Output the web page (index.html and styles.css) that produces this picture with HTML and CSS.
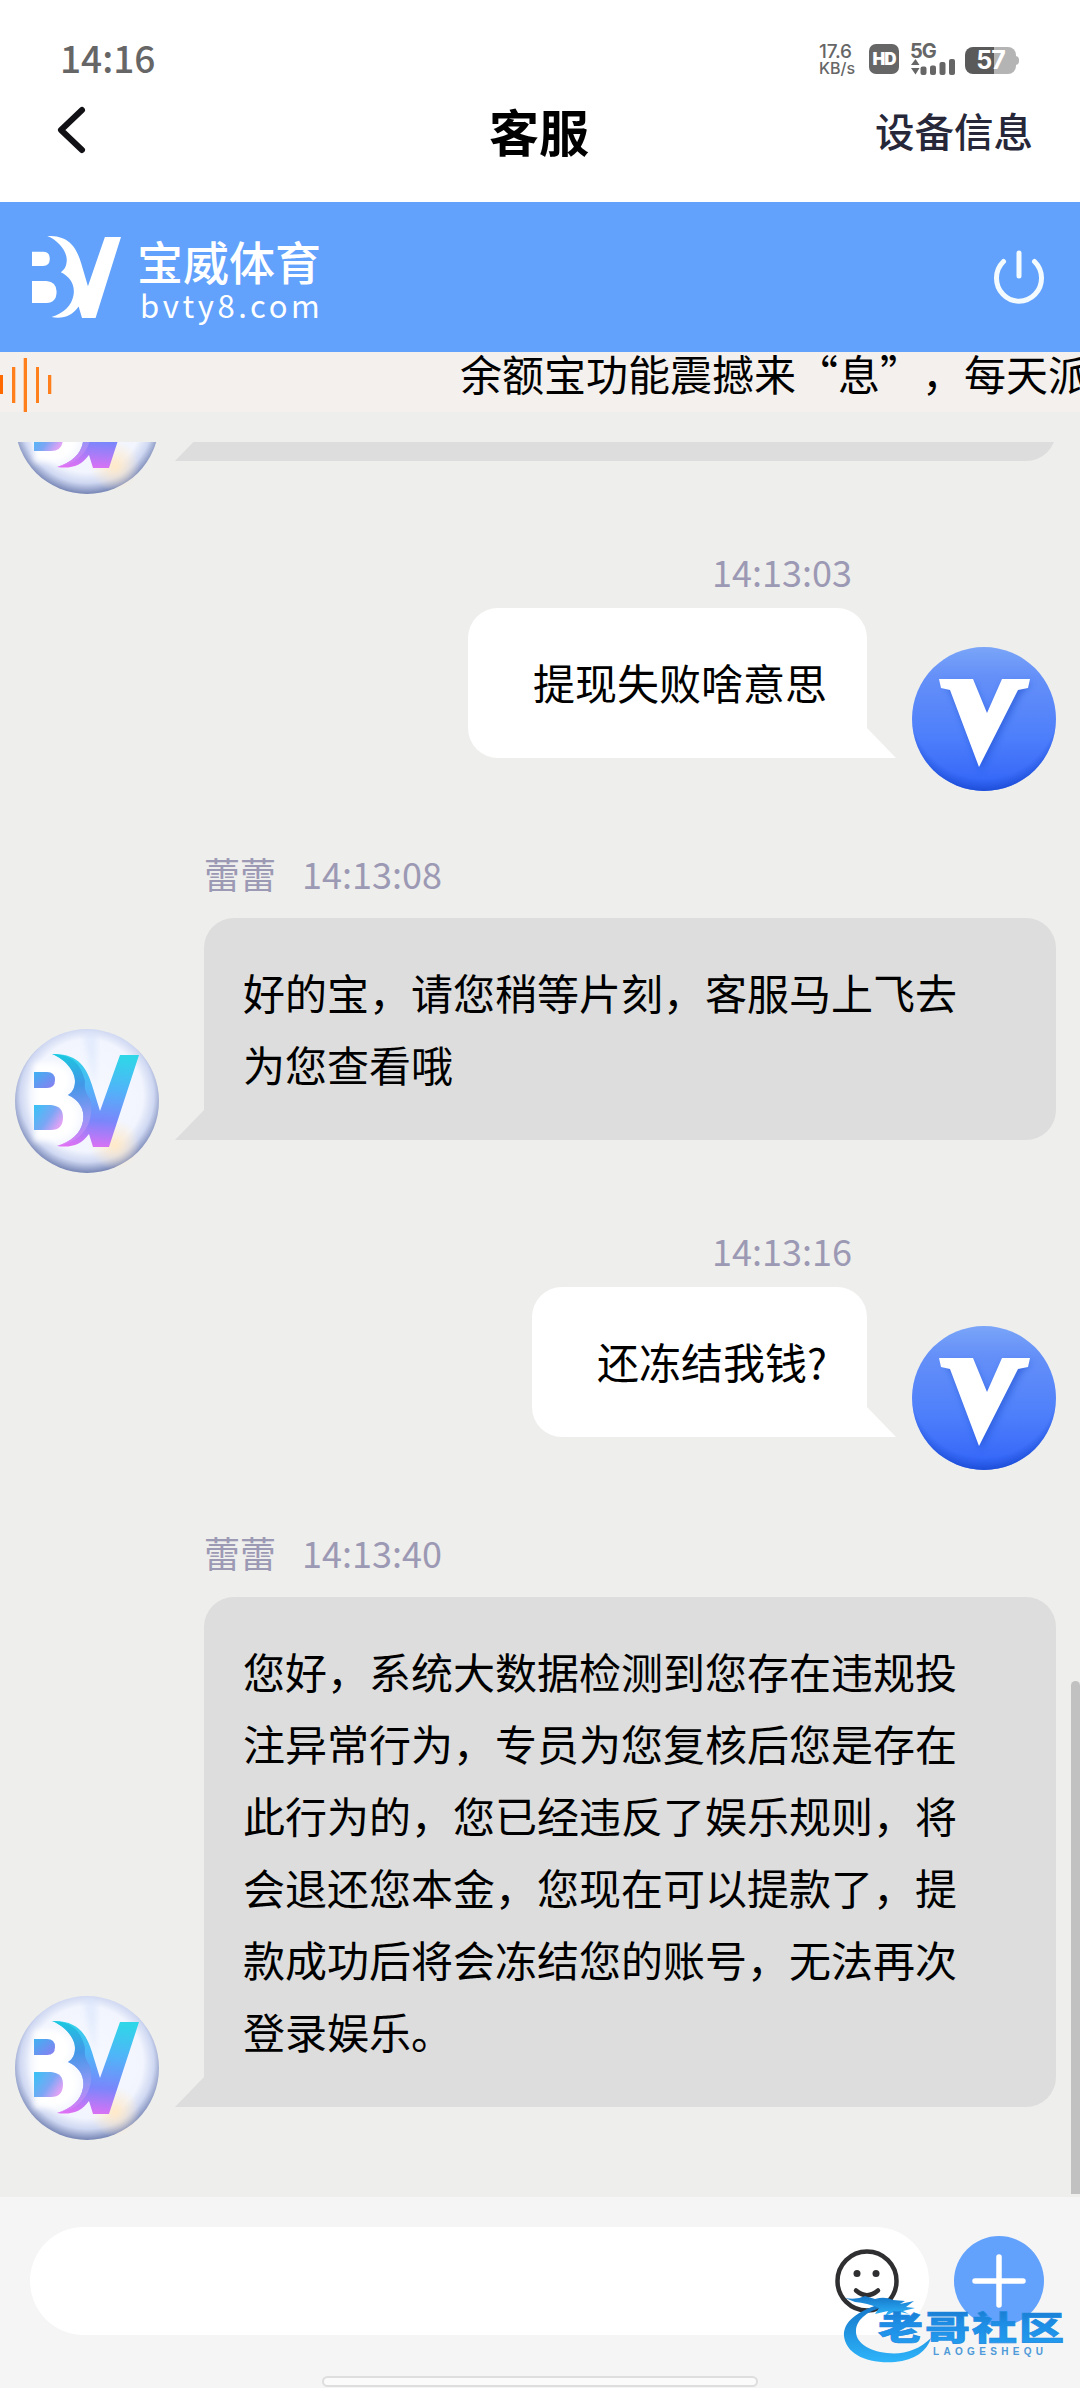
FILE: index.html
```html
<!DOCTYPE html>
<html lang="zh-CN">
<head>
<meta charset="utf-8">
<title>客服</title>
<link rel="stylesheet" href="styles.css">
</head>
<body>
<svg class="defs" width="0" height="0" aria-hidden="true">
  <defs>
    <linearGradient id="bvFill" gradientUnits="userSpaceOnUse" x1="70" y1="25" x2="62" y2="118">
      <stop offset="0" stop-color="#2fd6e8"/>
      <stop offset=".35" stop-color="#50b4f8"/>
      <stop offset=".7" stop-color="#7a86fb"/>
      <stop offset="1" stop-color="#e070f4"/>
    </linearGradient>
    <linearGradient id="bvTop" x1="0" y1="0" x2="1" y2="1">
      <stop offset="0" stop-color="#3fb2f2"/><stop offset="1" stop-color="#8b7cf0"/>
    </linearGradient>
    <linearGradient id="bvLow" x1="0" y1="0" x2="1" y2=".6">
      <stop offset="0" stop-color="#36c3f5"/><stop offset=".6" stop-color="#7aa6f5"/><stop offset="1" stop-color="#e0a2f5"/>
    </linearGradient>
    <linearGradient id="bvShade" gradientUnits="userSpaceOnUse" x1="50" y1="25" x2="62" y2="118">
      <stop offset="0" stop-color="#14c3dc"/><stop offset=".35" stop-color="#3f8ce2"/><stop offset=".7" stop-color="#9c9cf4"/><stop offset="1" stop-color="#e57bf5"/>
    </linearGradient>
    <radialGradient id="pearl" cx=".5" cy=".46" r=".54">
      <stop offset="0" stop-color="#f6f9ff"/>
      <stop offset=".72" stop-color="#f2f5fe"/>
      <stop offset=".86" stop-color="#cfd8f2"/>
      <stop offset="1" stop-color="#7584b4"/>
    </radialGradient>
    <radialGradient id="warm" cx=".5" cy=".5" r=".5">
      <stop offset="0" stop-color="#ffe9c8"/><stop offset="1" stop-color="#ffe9c8" stop-opacity="0"/>
    </radialGradient>
    <linearGradient id="vBase" x1="0" y1="0" x2="0" y2="1">
      <stop offset="0" stop-color="#7aa5f8"/>
      <stop offset=".2" stop-color="#6590f8"/>
      <stop offset=".6" stop-color="#4f80fb"/>
      <stop offset="1" stop-color="#3163f8"/>
    </linearGradient>
    <radialGradient id="vEdge" cx=".5" cy=".4" r=".61">
      <stop offset=".84" stop-color="#1c4fd8" stop-opacity="0"/>
      <stop offset="1" stop-color="#1746cc" stop-opacity=".85"/>
    </radialGradient>
    <filter id="soft" x="-20%" y="-20%" width="140%" height="140%"><feGaussianBlur stdDeviation="3"/></filter>
    <linearGradient id="markFill" x1="0" y1="0" x2="0" y2="1">
      <stop offset="0" stop-color="#1673c4"/><stop offset=".5" stop-color="#1e8ee6"/><stop offset="1" stop-color="#239ff0"/>
    </linearGradient>
    <linearGradient id="ringFill" x1="0" y1="0" x2="0" y2="1">
      <stop offset="0" stop-color="#1576c8"/><stop offset="1" stop-color="#2eb4fa"/>
    </linearGradient>
  </defs>
  <symbol id="bvMark" viewBox="19 25 105 93" preserveAspectRatio="none">
    <path d="M19 43H32Q40 43 40 51Q40 59 32 59H19Z"/>
    <path d="M19 76H36Q48 77 48 88Q48 101 36 101H19Z"/>
    <path d="M37 25C64 24 72 40 77 56L85 82L105 26H124L94 118H78L74 105C66 116 56 119 42 117C56 113 66 104 68 92C70 80 64 71 53 66C58 63 60 58 60 52C60 42 50 30 37 25Z"/>
  </symbol>
  <symbol id="agentFace" viewBox="0 0 144 144">
    <circle cx="72" cy="72" r="72" fill="url(#pearl)"/>
    <circle cx="100" cy="116" r="25" fill="url(#warm)"/>
    <path d="M68 4L82 4L80 60Z" fill="#cfdffb" opacity=".45" filter="url(#soft)"/>
    <path d="M19 34H40Q57 38 56 52Q56 62 50 66Q62 72 64 88Q61 109 42 112H19Z" fill="#fff" filter="url(#soft)"/>
    <path d="M19 43H32Q40 43 40 51Q40 59 32 59H19Z" fill="url(#bvTop)"/>
    <path d="M19 76H36Q48 77 48 88Q48 101 36 101H19Z" fill="url(#bvLow)"/>
    <path d="M37 25C64 24 72 40 77 56L85 82L105 26H124L94 118H78L74 105C66 116 56 119 42 117C56 113 66 104 68 92C70 80 64 71 53 66C58 63 60 58 60 52C60 42 50 30 37 25Z" fill="url(#bvFill)"/>
    <path d="M37 25C60 25 67 39 70 52C69 60 71 64 75 70C80 91 70 113 42 117C56 113 66 104 68 92C70 80 64 71 53 66C58 63 60 58 60 52C60 42 50 30 37 25Z" fill="url(#bvShade)" opacity=".75"/>
  </symbol>
  <symbol id="userFace" viewBox="0 0 144 144">
    <circle cx="72" cy="72" r="72" fill="url(#vBase)"/>
    <circle cx="72" cy="72" r="72" fill="url(#vEdge)"/>
    <path d="M32 36H61L76 69L92 36H120L109 47L69 124L40 48Z" fill="#1e50cf" opacity=".55" filter="url(#soft)"/>
    <path d="M27 32H61L75 66L90 32H118L116 41L106 43L67 120L38 43L29 41Z" fill="#fff"/>
  </symbol>
</svg>

<div class="screen">
  <div class="status">
    <span class="clock">14:16</span>
    <div class="indicators">
      <div class="speed"><span>17.6</span><span>KB/s</span></div>
      <div class="hd">HD</div>
      <div class="signal">
        <span>5G</span>
        <svg width="46" height="17" viewBox="0 0 46 17" fill="#666"><path d="M1 7L5.500 1L9.500 7ZM1 10L5.500 16.500L9.500 10Z"/><rect x="10.500" y="8.500" width="6" height="8.500" rx="2"/><rect x="20" y="7.500" width="6" height="9.500" rx="2"/><rect x="29.500" y="4" width="6" height="13" rx="2"/><rect x="39" y="1" width="6" height="16" rx="2"/></svg>
      </div>
      <div class="battery"><span>57</span></div>
    </div>
  </div>

  <header class="titlebar">
    <svg class="back" width="34" height="52" viewBox="0 0 34 52" fill="none" stroke="#111116" stroke-width="6" stroke-linecap="round" stroke-linejoin="round"><path d="M27 6L6 26L27 46"/></svg>
    <h1>客服</h1>
    <span class="device">设备信息</span>
  </header>

  <div class="brandbar">
    <svg class="mark" width="89" height="82" fill="#fff"><use href="#bvMark" width="89" height="82"/></svg>
    <div class="brand">
      <span class="brand-name">宝威体育</span>
      <span class="brand-url">bvty8.com</span>
    </div>
    <svg class="power" width="54" height="58" viewBox="0 0 54 58" fill="none" stroke="#f4fbff" stroke-width="5" stroke-linecap="round"><path d="M11.500 13.500A22.500 23 0 1 0 42.500 13.500M27 5V28"/></svg>
  </div>

  <div class="notice">
    <svg width="54" height="60" viewBox="0 0 54 60" fill="#ff7f1c"><path fill="#ff6a00" d="M0 23H3V42H0Z"/><path d="M12 15H15.300V51H12ZM23.700 6H27V60H23.700ZM36 15H39V51H36ZM48 23H51.300V42H48Z"/></svg>
    <span class="notice-text">余额宝功能震撼来“息”，每天派</span>
  </div>

  <main class="chat">
    <article class="msg agent">
      <svg class="avatar"><use href="#agentFace"/></svg>
      <div class="body"><div class="bubble"></div></div>
    </article>
    <article class="msg user">
      <div class="body">
        <div class="meta"><span>14:13:03</span></div>
        <div class="bubble">提现失败啥意思</div>
      </div>
      <svg class="avatar"><use href="#userFace"/></svg>
    </article>
    <article class="msg agent">
      <svg class="avatar"><use href="#agentFace"/></svg>
      <div class="body">
        <div class="meta"><span>蕾蕾</span><span>14:13:08</span></div>
        <div class="bubble">好的宝，请您稍等片刻，客服马上飞去为您查看哦</div>
      </div>
    </article>
    <article class="msg user">
      <div class="body">
        <div class="meta"><span>14:13:16</span></div>
        <div class="bubble">还冻结我钱?</div>
      </div>
      <svg class="avatar"><use href="#userFace"/></svg>
    </article>
    <article class="msg agent">
      <svg class="avatar"><use href="#agentFace"/></svg>
      <div class="body">
        <div class="meta"><span>蕾蕾</span><span>14:13:40</span></div>
        <div class="bubble">您好，系统大数据检测到您存在违规投注异常行为，专员为您复核后您是存在此行为的，您已经违反了娱乐规则，将会退还您本金，您现在可以提款了，提款成功后将会冻结您的账号，无法再次登录娱乐。</div>
      </div>
    </article>
    <div class="thumb"></div>
  </main>

  <footer class="composer">
    <div class="row">
      <div class="field">
        <svg width="64" height="64" viewBox="0 0 64 64" fill="none" stroke="#2f2f31" stroke-width="4.500" stroke-linecap="round"><circle cx="32" cy="32" r="29.500"/><path d="M21 41.500Q32 51 43 41.500"/><g fill="#2f2f31" stroke="none"><circle cx="22" cy="24.500" r="3.500"/><circle cx="41" cy="24.500" r="3.500"/></g></svg>
      </div>
      <div class="add">
        <svg width="90" height="90" viewBox="0 0 90 90" stroke="#fff" stroke-width="5.500" stroke-linecap="round"><path d="M21 45H69M45 21V69"/></svg>
      </div>
    </div>
    <div class="homebar"></div>
  </footer>

  <svg class="watermark" width="226" height="76" viewBox="0 0 226 76">
    <g fill="url(#ringFill)">
      <path d="M38 10C14 17 0 28 1 42C3 60 24 70 52 68C72 66 84 57 88 44C76 56 60 61 44 59C25 57 12 48 13 36C14 25 25 16 45 12Z"/>
      <path d="M2 4Q14 6 22 2L32 5Q42 2 50 6L62 7L57 10L71 7L63 13L72 14L60 17L66 20L53 17L42 22L45 17L32 20L36 14Q24 9 12 8Z"/>
    </g>
    <g transform="translate(35 63) scale(1 .74)">
      <text class="wm-name" x="0" y="-23.500" textLength="186" lengthAdjust="spacing">老哥社区</text>
    </g>
    <text class="wm-latin" x="90" y="60.500" textLength="110" lengthAdjust="spacing">LAOGESHEQU</text>
  </svg>
</div>
</body>
</html>
```
FILE: styles.css
```css
* { box-sizing: border-box; }

body {
  margin: 0;
  font-family: "Noto Sans CJK SC", "Noto Sans", sans-serif;
  color: #000;
}

svg { display: block; flex: none; }
.defs { position: absolute; }

.screen {
  position: relative;
  display: flex;
  flex-direction: column;
  width: 1080px;
  height: 2388px;
  overflow: hidden;
  background: #eeeeec;
}

/* status bar */
.status {
  display: flex;
  justify-content: space-between;
  height: 84px;
  padding: 32px 60px 0 60px;
  background: #fff;
  color: #666;
}
.clock { font-size: 37px; line-height: 50px; font-weight: 500; }
.indicators { display: flex; padding-top: 12px; height: 42px; }
.speed {
  display: flex;
  flex-direction: column;
  width: 38px;
  margin-right: 12px;
  margin-left: -1px;
  font: 500 19px/15px Inter, sans-serif;
  letter-spacing: -.2px;
  white-space: nowrap;
}
.speed span + span { font-size: 16px; line-height: 19px; letter-spacing: 0; }
.hd {
  width: 30px;
  height: 30px;
  margin-right: 11px;
  border-radius: 7px;
  background: #666;
  color: #fff;
  text-align: center;
  font: 900 17px/30px Inter, sans-serif;
  letter-spacing: -1px;
}
.signal { width: 46px; margin-right: 9px; font: 700 20px/15px Inter, sans-serif; letter-spacing: -1px; }
.signal span { display: block; height: 14px; }
.battery {
  position: relative;
  width: 51px;
  height: 27px;
  margin: 3px 4px 0 0;
  border-radius: 8px;
  background: linear-gradient(90deg, #5a5a5a 29px, #b4b4b4 29px);
  color: #fff;
  font: 700 25px/27px Inter, sans-serif;
  letter-spacing: -1px;
  text-align: center;
}
.battery::after {
  content: "";
  position: absolute;
  left: 50px;
  top: 9px;
  width: 4px;
  height: 9px;
  border-radius: 0 4px 4px 0;
  background: #b4b4b4;
}

/* title bar */
.titlebar {
  display: grid;
  grid-template-columns: 1fr auto 1fr;
  align-items: center;
  height: 118px;
  padding: 0 47px 27px 55px;
  background: #fff;
}
.titlebar h1 { margin: 0; font-size: 50px; line-height: 60px; font-weight: 700; padding-right: 10px; }
.device { justify-self: end; font-size: 39.5px; line-height: 60px; font-weight: 500; color: #27273a; }

/* brand bar */
.brandbar {
  display: flex;
  align-items: center;
  height: 150px;
  padding: 0 34px 0 32px;
  background: #62a2fc;
  color: #fff;
}
.brand { display: flex; flex-direction: column; margin-left: 16px; padding-bottom: 3px; }
.brand-name { font-size: 46px; line-height: 58px; font-weight: 500; }
.brand-url {
  padding-left: 3px;
  font: 400 31px/32px "Noto Sans CJK SC", sans-serif;
  letter-spacing: 3.600px;
}
.power { margin-left: auto; }

/* scrolling notice */
.notice {
  display: flex;
  height: 60px;
  overflow: hidden;
  background: #f4f0ed;
}
.notice-text {
  margin-left: 406px;
  font-size: 42px;
  line-height: 42px;
  white-space: nowrap;
  text-spacing-trim: space-all;
  font-kerning: none;
}

/* chat */
.chat {
  position: relative;
  display: flex;
  flex-direction: column;
  justify-content: flex-end;
  height: 1755px;
  margin-top: 30px;
  padding: 0 24px 57px 15px;
  overflow: hidden;
}
.msg { display: flex; align-items: flex-end; flex: none; }
.avatar { width: 144px; height: 144px; }
.body { display: flex; flex-direction: column; padding-bottom: 33px; }
.meta {
  display: flex;
  gap: 26px;
  font-size: 36px;
  line-height: 54px;
  color: #9c99b4;
}
.bubble {
  position: relative;
  min-height: 150px;
  padding: 38px 40px 40px;
  border-radius: 30px;
  font-size: 42px;
  line-height: 72px;
}
.bubble::after {
  content: "";
  position: absolute;
  bottom: 0;
  width: 60px;
  height: 30px;
  background: inherit;
}
.agent { margin-top: 55px; }
.agent .body { flex: 1; margin-left: 45px; }
.agent .meta { margin-bottom: 18px; }
.agent .bubble { padding-left: 39px; padding-right: 90px; background: #ddd; }
.agent .bubble::after { left: -29px; clip-path: polygon(29px 0, 100% 0, 100% 100%, 0 100%); }
.user { margin-top: 50px; justify-content: flex-end; }
.user .body { align-items: flex-end; margin-right: 45px; }
.user .meta { margin: 0 15px 10px 0; }
.user .bubble { padding-left: 65px; background: #fff; }
.user .bubble::after { right: -29px; clip-path: polygon(0 0, 31px 0, 100% 100%, 0 100%); }
.thumb {
  position: absolute;
  right: 0;
  top: 1239px;
  width: 9px;
  height: 513px;
  border-radius: 5px 5px 0 0;
  background: #c1c1c1;
}

/* composer */
.composer {
  display: flex;
  flex-direction: column;
  align-items: center;
  justify-content: space-between;
  flex: 1;
  padding: 30px 36px 1px 30px;
  background: #f5f5f5;
}
.row { display: flex; align-items: center; justify-content: space-between; width: 100%; }
.field {
  display: flex;
  align-items: center;
  justify-content: flex-end;
  width: 899px;
  height: 108px;
  padding-right: 30px;
  border-radius: 54px;
  background: #fff;
}
.add { width: 90px; height: 90px; border-radius: 50%; background: #62a2fc; }
.homebar {
  width: 436px;
  height: 11px;
  margin-left: 6px;
  border: 2px solid #dedede;
  border-radius: 6px;
  background: #fbfbfb;
}

/* community stamp over the composer */
.watermark { position: absolute; left: 843px; top: 2294px; }
.wm-name { font-size: 45px; font-weight: 900; fill: url(#markFill); stroke: #1f8be2; stroke-width: 1; }
.wm-latin { font: 700 10px "Liberation Sans", sans-serif; fill: #4f9ad8; }
```
